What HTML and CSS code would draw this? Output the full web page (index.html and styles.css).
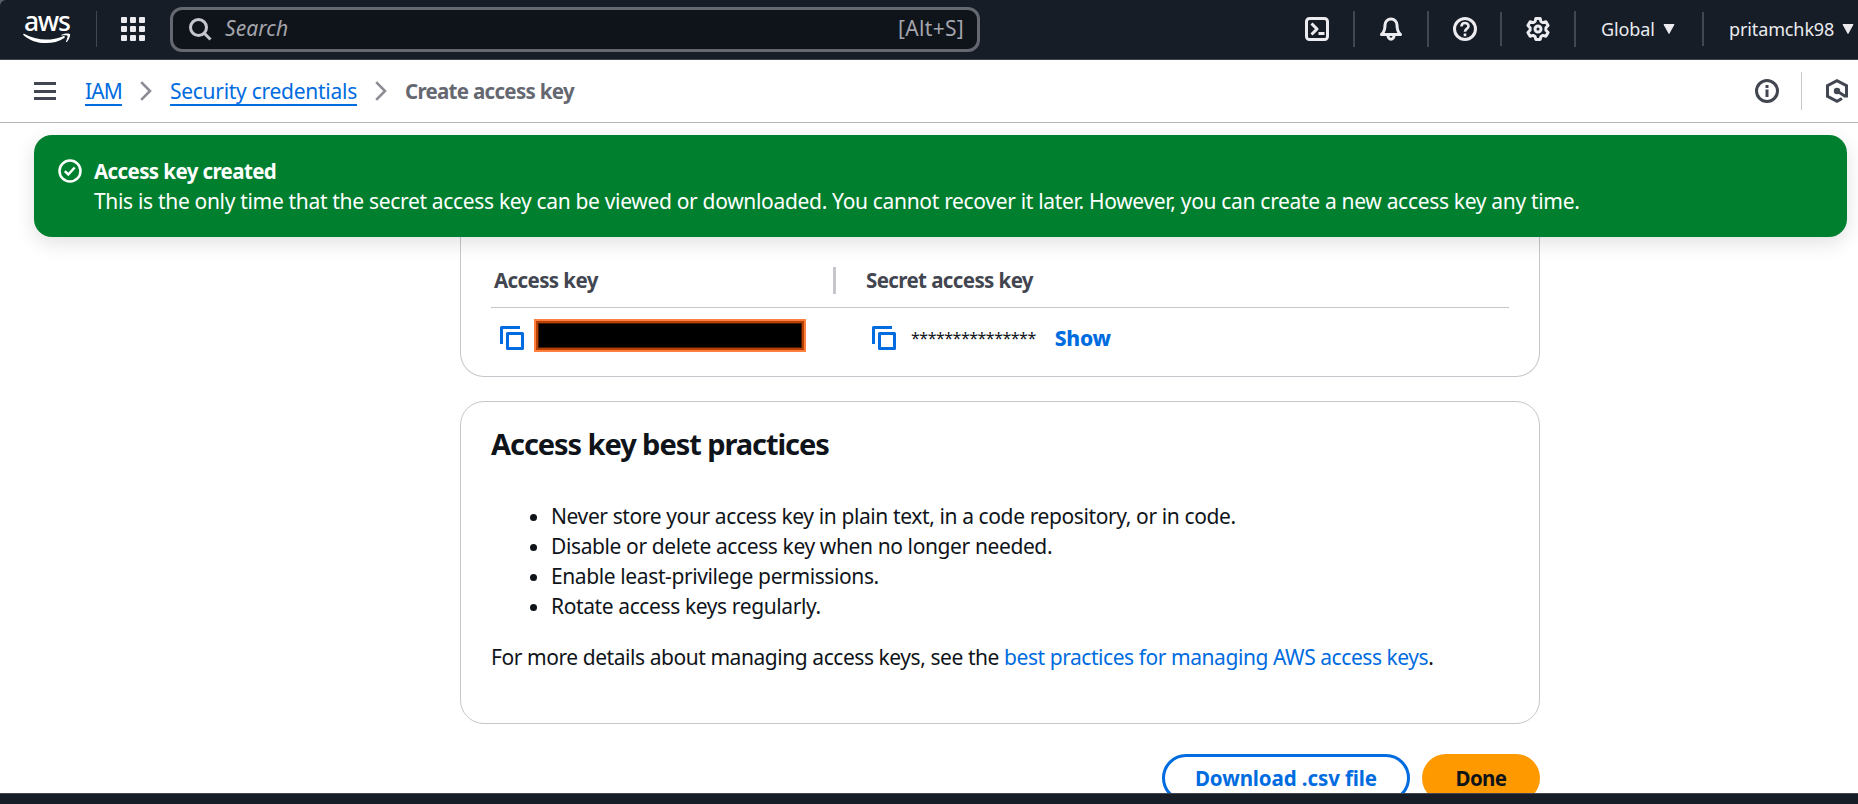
FILE: index.html
```html
<!DOCTYPE html>
<html lang="en">
<head>
<meta charset="utf-8">
<title>Create access key | IAM</title>
<link rel="stylesheet" href="styles.css">
</head>
<body>
<div class="page">
  <header class="topnav">
    <div class="logo">
      <span class="logo-word">aws</span>
      <svg class="logo-smile" width="48" height="11" viewBox="0 0 48 11"><path d="M1 .8C13 7.6 28 8.500 40 3.200 41.500 2.600 42.500 4 41.300 4.900 30 12.500 11 12 .4 1.900 0 1.200.3.500 1 .8Z"/><path d="M38.500 1.700C42 .1 46.500.1 47 1.100 47.500 2.500 46.300 6.700 43.800 8.900 43.200 9.300 42.800 9 43 8.400 43.900 6.200 45 3.700 44.400 2.800 43.600 2.100 40.800 2.300 38.900 2.500 38.200 2.500 38 2 38.500 1.700Z"/></svg>
    </div>
    <div class="apps"><i></i><i></i><i></i><i></i><i></i><i></i><i></i><i></i><i></i></div>
    <div class="search">
      <svg width="23" height="23" viewBox="0 0 23 23" class="ic-search"><circle cx="9.500" cy="9.500" r="8"/><path d="M15 15l6.500 6.500"/></svg>
      <span class="search-ph">Search</span>
      <span class="search-key">[Alt+S]</span>
    </div>
    <div class="nav-icons">
      <div class="nav-cell"><svg class="ic-nav" width="24" height="24" viewBox="0 0 24 24"><rect x="1.500" y="1.500" width="21" height="21" rx="3"/><path d="M6.500 6.500l5.500 5.500-5.500 5.500M13.500 16.500h6"/></svg></div>
      <div class="nav-cell wide"><svg class="ic-nav" width="24" height="24" viewBox="0 0 24 24"><path d="M2.500 17.500Q6 14.500 6 8A6 6 0 0 1 18 8Q18 14.500 21.500 17.500ZM9 18.500a3 3.700 0 0 0 6 0"/></svg></div>
      <div class="nav-cell slim"><svg class="ic-nav" width="24" height="24" viewBox="0 0 24 24"><circle cx="12" cy="12" r="10.500"/><path class="thin" d="M8.500 9.500C8.500 4.800 15.500 4.800 15.500 9.200 15.500 11.800 12 11.500 12 14.800M12 16.500v2.700"/></svg></div>
      <div class="nav-cell"><svg class="ic-nav" width="24" height="24" viewBox="0 0 24 24"><path d="M9.800 1.500h4.400l.7 3 2 1.100 3-.9 2.200 3.800-2.200 2.200v2.600l2.200 2.200-2.200 3.800-3-.9-2 1.100-.7 3H9.800l-.7-3-2-1.100-3 .9-2.200-3.800 2.200-2.200v-2.600L1.900 8.500l2.200-3.800 3 .9 2-1.100Z"/><circle cx="12" cy="12" r="3"/></svg></div>
    </div>
    <div class="region"><span>Global</span><svg class="caret" width="12" height="11" viewBox="0 0 12 11"><path d="M1 .5h10L6 9.500Z"/></svg></div>
    <div class="account"><span>pritamchk98</span><svg class="caret" width="12" height="11" viewBox="0 0 12 11"><path d="M1 .5h10L6 9.500Z"/></svg></div>
  </header>

  <nav class="crumbs">
    <div class="burger"><i></i><i></i><i></i></div>
    <a class="crumb c-iam">IAM</a>
    <svg class="chev" width="12" height="20" viewBox="0 0 12 20"><path d="M1.200 1.200L10 10l-8.800 8.800"/></svg>
    <a class="crumb c-sec">Security credentials</a>
    <svg class="chev" width="12" height="20" viewBox="0 0 12 20"><path d="M1.200 1.200L10 10l-8.800 8.800"/></svg>
    <span class="current">Create access key</span>
    <div class="tools">
      <svg class="ic-dark" width="24" height="24" viewBox="0 0 24 24"><circle cx="12" cy="12" r="10.500"/><path d="M12 6v3M12 10.500V18"/></svg>
      <i class="tool-sep"></i>
      <svg class="ic-dark" width="24" height="24" viewBox="0 0 24 24"><path d="M17 19.500l-5 2.800-9.500-5V6.600L12 1.700l9.500 4.900v11.900M12 12l8.500 5.500"/><circle cx="12" cy="12" r="1.700"/></svg>
    </div>
  </nav>

  <section class="flash">
    <svg class="ic-ok" width="24" height="24" viewBox="0 0 24 24"><circle cx="12" cy="12" r="10.500"/><path d="M6.800 12.200l3.500 3.300 6.400-7"/></svg>
    <div class="flash-text">
      <div class="flash-title">Access key created</div>
      <div class="flash-body">This is the only time that the secret access key can be viewed or downloaded. You cannot recover it later. However, you can create a new access key any time.</div>
    </div>
  </section>

  <main class="content">
    <section class="card keys">
      <div class="row head">
        <div class="cell first"><span>Access key</span></div>
        <div class="cell"><span>Secret access key</span></div>
      </div>
      <div class="row vals">
        <div class="cell first"><svg class="ic-copy" width="24" height="24" viewBox="0 0 24 24"><path d="M1.500 18V1.500H20"/><rect x="7.500" y="7.500" width="15" height="15"/></svg><div class="redacted"></div></div>
        <div class="cell"><svg class="ic-copy" width="24" height="24" viewBox="0 0 24 24"><path d="M1.500 18V1.500H20"/><rect x="7.500" y="7.500" width="15" height="15"/></svg><span class="mask">***************</span><a class="show">Show</a></div>
      </div>
    </section>

    <section class="card best">
      <h2>Access key best practices</h2>
      <ul>
        <li>Never store your access key in plain text, in a code repository, or in code.</li>
        <li>Disable or delete access key when no longer needed.</li>
        <li>Enable least-privilege permissions.</li>
        <li>Rotate access keys regularly.</li>
      </ul>
      <p>For more details about managing access keys, see the <a>best practices for managing AWS access keys</a>.</p>
    </section>

    <div class="actions">
      <div class="btn ghost">Download .csv file</div>
      <div class="btn primary">Done</div>
    </div>
  </main>
  <footer class="footer"></footer>
</div>
</body>
</html>
```

FILE: styles.css
```css
* { box-sizing: border-box; }
body { margin: 0; background: #fff; color: #0f141a; font: 21px/30px "Noto Sans", sans-serif; letter-spacing: -0.390px; }
svg { display: block; flex: none; fill: none; }
i { display: block; flex: none; }
span, a { white-space: nowrap; }
.page { width: 1858px; height: 804px; display: flex; flex-direction: column; overflow: hidden; background: linear-gradient(#5a5e66 0 20px, #fff 20px); }

.topnav { height: 60px; flex: none; display: flex; align-items: center; background: #161d26; border-bottom: 1px solid #424650; border-top-left-radius: 6px; color: #ebebf0; padding-bottom: 1px; }
.logo { width: 97px; height: 36px; border-right: 1px solid #424650; padding: 1px 0 0 23px; flex: none; }
.logo-word { display: block; height: 21px; line-height: 19px; font-size: 26.500px; font-weight: 500; letter-spacing: -1.300px; color: #fff; padding-left: 1px; }
.logo-smile { fill: #fff; }
.apps { display: grid; grid-template-columns: repeat(3, 6px); gap: 3px; margin-left: 24px; }
.apps i { width: 6px; height: 6px; background: #ebebf0; border-radius: 1px; }
.search { width: 810px; height: 45px; margin-left: 25px; border: 3px solid #656871; border-radius: 12px; background: #0f141a; display: flex; align-items: center; padding: 0 13px 0 16px; flex: none; color: #a4a4ad; }
.ic-search { stroke: #c6c6cd; stroke-width: 3; }
.search-ph { font-style: italic; margin-left: 13px; margin-top: -2px; letter-spacing: 0.100px; }
.search-key { margin-left: auto; margin-top: -2px; letter-spacing: 0.300px; }
.nav-icons { display: flex; margin-left: 300px; }
.nav-cell { width: 74px; height: 36px; display: flex; align-items: center; justify-content: center; border-right: 2px solid #424650; }
.nav-cell:first-child { width: 75px; padding-left: 1px; }
.wide { width: 74px; padding-right: 1px; }
.slim { width: 73px; height: 34px; margin-top: 1px; }
.ic-nav { stroke: #ebebf0; stroke-width: 3; stroke-linejoin: round; }
.thin { stroke-width: 2.600; }
.region, .account { display: flex; align-items: center; height: 34px; font-size: 18px; letter-spacing: -0.120px; }
.region { width: 128px; border-right: 2px solid #424650; padding-left: 25px; }
.account { padding-left: 25px; }
.caret { margin-left: 8px; fill: #ebebf0; stroke: #ebebf0; stroke-width: 1; stroke-linejoin: round; }

.crumbs { height: 63px; flex: none; display: flex; align-items: center; background: #fff; border-bottom: 1px solid #b4b4bb; padding-left: 34px; }
.burger { width: 22px; display: grid; gap: 4.500px; margin-right: 29px; }
.burger i { height: 3px; background: #424650; }
.crumb { color: #006ce0; border-bottom: 2px solid #006ce0; height: 27px; line-height: 24px; margin-top: 2px; }
.c-iam { letter-spacing: -0.900px; }
.c-sec { letter-spacing: -0.270px; }
.chev { stroke: #8c8c94; stroke-width: 2.600; margin: 0 18px; }
.current { color: #656871; font-size: 20.500px; font-weight: 700; letter-spacing: -0.690px; padding-bottom: 1px; }
.tools { margin-left: auto; display: flex; align-items: center; padding-right: 9px; }
.tool-sep { width: 1px; height: 38px; background: #c6c6cd; margin: 0 23px 0 22px; }
.ic-dark { stroke: #424650; stroke-width: 3; }

.flash { position: relative; z-index: 1; flex: none; height: 102px; margin: 12px 11px 0 34px; background: #00802f; border-radius: 18px; box-shadow: 0 6px 20px rgba(0,7,22,.12); color: #fff; display: flex; padding: 20px 24px; }
.ic-ok { stroke: #fff; stroke-width: 2.500; margin-top: 4px; }
.flash-text { margin-left: 12px; padding-top: 1px; }
.flash-title { font-size: 20.500px; font-weight: 700; letter-spacing: -0.600px; }
.flash-body { white-space: nowrap; letter-spacing: -0.320px; }

.content { width: 1080px; margin-left: 460px; flex: 1; min-height: 0; overflow: hidden; }
.card { border: 1px solid #c6c6cd; border-radius: 24px; padding: 0 30px; }
.keys { height: 140px; border-top: 0; border-radius: 0 0 24px 24px; padding-top: 20px; }
.row { display: flex; }
.head { height: 51px; border-bottom: 1px solid #c6c6cd; color: #424650; font-size: 20.500px; font-weight: 700; letter-spacing: -0.600px; padding-top: 10px; }
.head .cell { height: 27px; line-height: 26px; padding-left: 30px; }
.head .first { width: 345px; border-right: 3px solid #c6c6cd; padding-left: 3px; }
.vals .cell { display: flex; align-items: center; height: 60px; padding-left: 36px; }
.vals .first { width: 345px; padding-left: 9px; }
.ic-copy { stroke: #006ce0; stroke-width: 3; stroke-linejoin: round; }
.redacted { width: 272px; height: 33px; margin: 0 0 5px 10px; background: #000; border: 4px solid #b64100; outline: 2px solid #ff7f3e; outline-offset: -2px; box-shadow: inset 0 0 0 1px #4a1b00; }
.mask { margin-left: 15px; font-size: 16px; letter-spacing: -0.500px; }
.show { margin: -1px 0 0 19px; color: #006ce0; font-weight: 800; letter-spacing: -0.200px; }

.best { height: 323px; margin-top: 24px; padding-top: 23px; }
h2 { margin: 0; font-size: 29px; line-height: 38px; font-weight: 700; letter-spacing: -1.060px; }
ul { margin: 38px 0 0; padding-left: 60px; }
p { margin: 21px 0 0; letter-spacing: -0.440px; }
p a { color: #006ce0; }
.actions { display: flex; justify-content: flex-end; gap: 12px; padding-top: 30px; }
.btn { height: 48px; border-radius: 24px; display: flex; align-items: center; justify-content: center; font-size: 20.500px; font-weight: 700; letter-spacing: -0.100px; padding-bottom: 1px; }
.ghost { width: 248px; border: 3px solid #006ce0; color: #006ce0; }
.primary { width: 118px; background: #ff9900; letter-spacing: -0.600px; }
.footer { flex: none; height: 11px; background: #161d26; border-top: 1px solid #424650; }
```
